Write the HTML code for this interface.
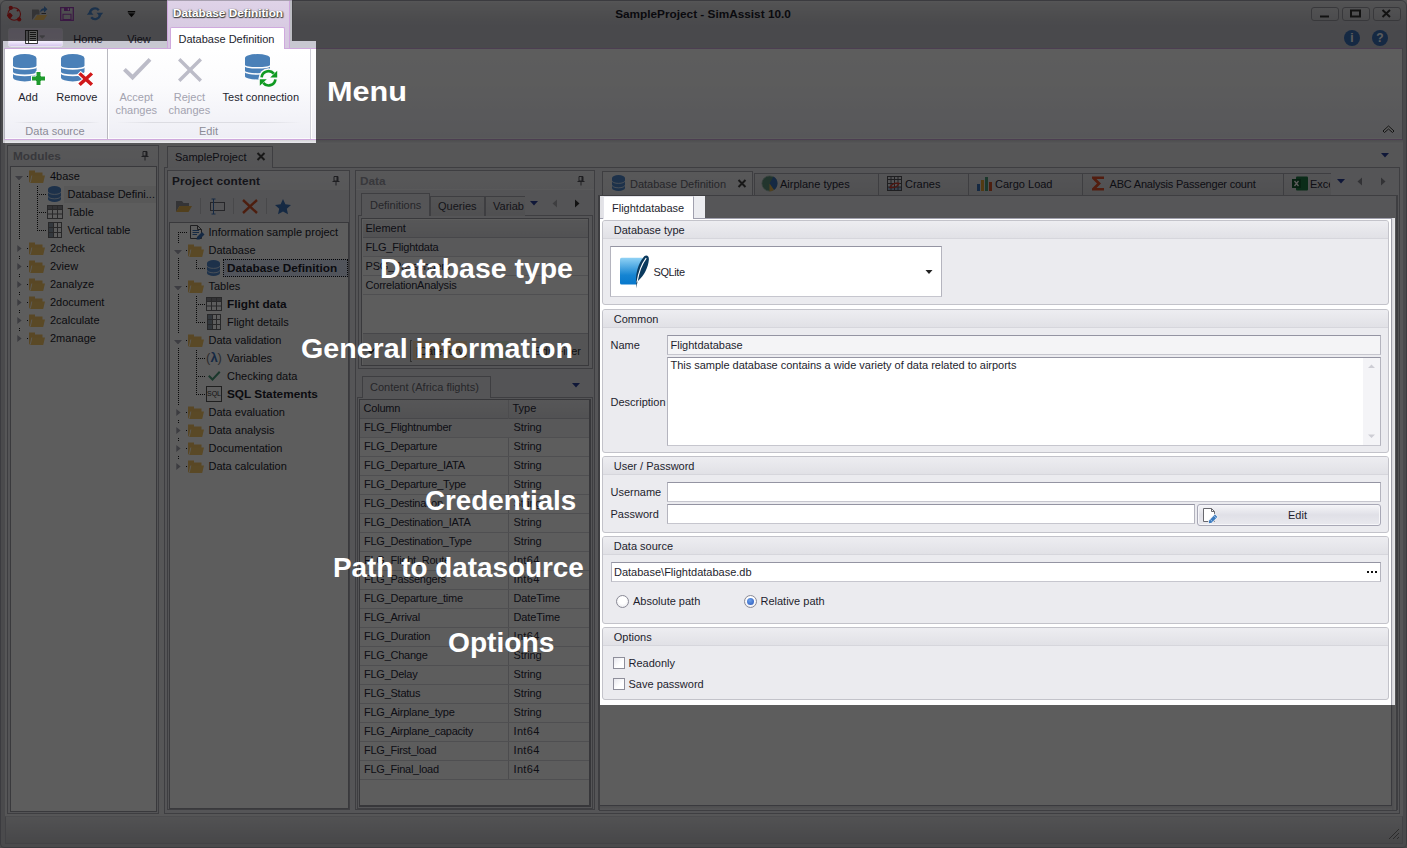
<!DOCTYPE html><html><head><meta charset="utf-8"><title>SampleProject - SimAssist 10.0</title><style>
*{box-sizing:border-box}
html,body{margin:0;padding:0}
body{width:1407px;height:848px;overflow:hidden;position:relative;background:#c9c9cd;font-family:"Liberation Sans",sans-serif;font-size:11px;color:#1e1e2e}
.a{position:absolute}
.t{position:absolute;white-space:nowrap;line-height:14px;height:14px}
.b{font-weight:700;font-size:11.8px}
.c{text-align:center}
.g{color:#9a9aa2}
.pn{position:absolute;background:#d4d4d8;border:1px solid #a9a9b0}
.wh{position:absolute;background:#fff;border:1px solid #9d9da6}
.hd{position:absolute;background:linear-gradient(#dedee2,#d2d2d7);}
.gb{position:absolute;left:602px;width:786.5px;background:#ebebef;border:1px solid #c3c3ca;border-radius:3px}
.gbh{position:absolute;left:0;top:0;right:0;height:18px;background:linear-gradient(#ededf1,#e1e1e6);border-bottom:1px solid #d6d6dc;border-radius:2px 2px 0 0}
.in{position:absolute;background:#fff;border:1px solid #b4b4be;border-top-color:#9494a2;border-bottom-color:#c6c6ce}
.tab{position:absolute;background:linear-gradient(#d9d9dd,#cfcfd4);border:1px solid #a5a5ad;border-bottom:none}
.row{position:absolute;left:0;right:0;height:19px;border-bottom:1px solid #dcdce0}
.lbl{position:absolute;color:#fff;font-weight:700;white-space:nowrap;line-height:1;font-size:28px}
</style></head><body><div id="app" class="a" style="left:0;top:0;width:1407px;height:848px;background:#cbcbcf"><div class="a" style="left:4.5px;top:140px;width:1398px;height:703.5px;background:#ebebef"></div><div class="a" style="left:0px;top:0px;width:1407px;height:26px;background:linear-gradient(#f0f0f2 0,#e2e2e5 3px,#cfcfd4 18px,#c8c8d1 26px)"></div><div class="a" style="left:0px;top:26px;width:1407px;height:22px;background:#c8c8d1"></div><div class="a" style="left:0px;top:0px;width:1407px;height:848px;border:1px solid #a2a2ac;border-radius:6px 6px 4px 4px"></div><div class="t c b" style="left:603px;width:200px;top:7px;color:#1c1c2a">SampleProject - SimAssist 10.0</div><div class="a" style="left:1310.5px;top:6.5px;width:28px;height:14.5px;border:1px solid #9a9aa2;border-radius:3px;background:linear-gradient(#e0e0e4,#cfcfd4)"></div><div class="a" style="left:1341.5px;top:6.5px;width:28px;height:14.5px;border:1px solid #9a9aa2;border-radius:3px;background:linear-gradient(#e0e0e4,#cfcfd4)"></div><div class="a" style="left:1372.5px;top:6.5px;width:28px;height:14.5px;border:1px solid #9a9aa2;border-radius:3px;background:linear-gradient(#e0e0e4,#cfcfd4)"></div><svg class="a" style="left:1310px;top:6px" width="92" height="16" viewBox="0 0 92 16"><path d="M10 10.5H19" stroke="#333" stroke-width="2"/><rect x="41" y="4.5" width="9" height="6" fill="none" stroke="#333" stroke-width="2"/><path d="M72.5 4L80 11M80 4L72.5 11" stroke="#333" stroke-width="2"/></svg><div class="a" style="left:1344px;top:29.5px;width:16px;height:16px;border-radius:8px;background:#3a70b8;color:#fff;font-weight:700;font-size:12px;line-height:16px;text-align:center">i</div><div class="a" style="left:1372px;top:29.5px;width:16px;height:16px;border-radius:8px;background:#3a70b8;color:#fff;font-weight:700;font-size:12px;line-height:16px;text-align:center">?</div><svg class="a" style="left:0px;top:0px" width="150" height="26" viewBox="0 0 150 26">
<circle cx="14.2" cy="14" r="6.3" fill="none" stroke="#e02424" stroke-width="1.1"/><g fill="#e02424"><circle cx="10.8" cy="7.8" r="2.1"/><path d="M9.8 12.4L12.8 15.6L9.8 18.8L6.8 15.6Z"/><circle cx="9.8" cy="15.6" r="2.2"/><circle cx="19.2" cy="19.4" r="2.1"/><circle cx="17.7" cy="10.5" r="1.1"/></g>
<path d="M32 9.5H38.5L39.5 11V14.5H36L32.5 19.5H32Z" fill="#8e8e94"/><path d="M33.8 20L37.2 15H47.2L43.8 20Z" fill="#f4c466"/><path d="M40.2 12.5C40.2 9.5 42 8.2 44 8.2V6L47.5 9.2L44 12.4V10.4C42.5 10.4 41.2 11 40.2 12.5Z" fill="#4a86cc"/><path d="M41.5 13H46V14H41.5Z" fill="#55555a"/>
<path d="M60.7 7.7H73.3V20.3H60.7Z" fill="none" stroke="#a044b8" stroke-width="1.3"/><path d="M64 7.5H70V11H64Z" fill="#a044b8"/><path d="M67.8 8.3H69V10.2H67.8Z" fill="#e8d8f0"/><path d="M63 14.3H71V19.6H63Z" fill="none" stroke="#a044b8" stroke-width="1.1"/>
<g fill="none" stroke="#4a86cc" stroke-width="2.3"><path d="M90 13A5 5 0 0 1 98.8 10.2"/><path d="M100 14.5A5 5 0 0 1 91.2 17.3"/></g><path d="M96.5 12.8H103.2L100 16.8Z M86.8 14.7H93.5L90 10.7Z" fill="#4a86cc"/>
<path d="M127.8 11H135.2V12.4H127.8Z M128 13.3H135L131.5 17.2Z" fill="#111"/>
</svg><div class="a" style="left:7.5px;top:27.5px;width:55px;height:19px;border:1px solid #e6e2ee;border-radius:2.5px;background:linear-gradient(#e6daf2 0,#eadff5 55%,#f2ecfc 75%,#d6c6ee 100%)"></div><svg class="a" style="left:24px;top:29px" width="24" height="16" viewBox="0 0 24 16"><rect x="1.6" y="1.5" width="11.8" height="13" fill="#fff" stroke="#222" stroke-width="0.9"/><rect x="2.2" y="2.1" width="1.8" height="10" fill="#b8b8bc"/><path d="M4.6 1.5V14.5" stroke="#222" stroke-width="0.9"/><path d="M5.8 3.5H12M5.8 5.5H12M5.8 7.5H12M5.8 9.5H12M5.8 11.5H12" stroke="#222" stroke-width="0.9"/><path d="M15.4 7L18.2 9.8L21 7L20 7H16.4Z" fill="#aaaab0"/><path d="M15.6 6.7H20.8" stroke="#88888e" stroke-width="0.6"/></svg><div class="t c " style="left:-12px;width:200px;top:32px;color:#2a2a3a">Home</div><div class="t c " style="left:39px;width:200px;top:32px;color:#2a2a3a">View</div><div class="a" style="left:167px;top:0px;width:122.5px;height:48px;background:linear-gradient(#dfd3e8 0,#d8cbe2 27px,#d6c8e0 48px);border:1px solid #cfa9dd;border-bottom:none;border-top:none"></div><div class="a" style="left:289.5px;top:0px;width:3px;height:41px;background:#bdbdc3"></div><div class="t c b" style="left:128px;width:200px;top:5.800000000000001px;color:#fff;text-shadow:0 1px 1px #444,1px 1px 1px #555,1px 0 1px #777,-1px 0 1px #999;font-size:11.8px">Database Definition</div><div class="a" style="left:167px;top:0px;width:125.5px;height:1px;background:#a8a0b0"></div><div class="a" style="left:4px;top:48px;width:1399px;height:92px;background:linear-gradient(#ffffff 0,#fbfbfd 40%,#eeeef5 100%);border-top:1px solid #cfa9dd;border-bottom:1px solid #cfa9dd;border-left:1px solid #b4b4be;border-right:1px solid #b4b4be;box-shadow:inset 0 -1px 0 #fafafc"></div><div class="a" style="left:169.5px;top:27px;width:115px;height:22px;background:#fff;border:1px solid #cfa9dd;border-bottom:none;border-radius:2px 2px 0 0"></div><div class="t c " style="left:126.5px;width:200px;top:32px;color:#1e1e2e">Database Definition</div><div class="a" style="left:107px;top:49px;width:1px;height:90px;background:#b9b9c0"></div><div class="a" style="left:108px;top:49px;width:1px;height:90px;background:#fff"></div><div class="a" style="left:309.5px;top:49px;width:1px;height:90px;background:#d0d0d8"></div><div class="a" style="left:310.5px;top:49px;width:1px;height:90px;background:#fff"></div><div class="a" style="left:14px;top:121.5px;width:86px;height:1px;background:linear-gradient(90deg,transparent,#dcdce2 20%,#dcdce2 80%,transparent)"></div><div class="a" style="left:116px;top:121.5px;width:186px;height:1px;background:linear-gradient(90deg,transparent,#dcdce2 20%,#dcdce2 80%,transparent)"></div><div class="t c " style="left:-45px;width:200px;top:124px;color:#8b8b96">Data source</div><div class="t c " style="left:108.5px;width:200px;top:124px;color:#8b8b96">Edit</div><svg class="a" style="left:12.8px;top:54px;overflow:visible" width="23.5" height="28" viewBox="0 0 23.5 28" preserveAspectRatio="none"><g fill="#4a80b8"><path d="M0 4.2A11.75 4.2 0 0 1 23.5 4.2V11.8A11.75 2.3 0 0 1 0 11.8Z"/><path d="M0 13.4A11.75 2.3 0 0 0 23.5 13.4V18A11.75 2.6 0 0 1 0 18Z"/><path d="M0 19.7A11.75 2.6 0 0 0 23.5 19.7V23.8A11.75 3.6 0 0 1 0 23.8Z"/></g></svg><svg class="a" style="left:31px;top:71px" width="15" height="15" viewBox="0 0 15 15"><path d="M5 0.5H10V5H14.5V10H10V14.5H5V10H0.5V5H5Z" fill="#1f9a2e" stroke="#fff" stroke-width="1"/></svg><div class="t c " style="left:-72px;width:200px;top:90px;">Add</div><svg class="a" style="left:60.8px;top:54px;overflow:visible" width="23.5" height="28" viewBox="0 0 23.5 28" preserveAspectRatio="none"><g fill="#4a80b8"><path d="M0 4.2A11.75 4.2 0 0 1 23.5 4.2V11.8A11.75 2.3 0 0 1 0 11.8Z"/><path d="M0 13.4A11.75 2.3 0 0 0 23.5 13.4V18A11.75 2.6 0 0 1 0 18Z"/><path d="M0 19.7A11.75 2.6 0 0 0 23.5 19.7V23.8A11.75 3.6 0 0 1 0 23.8Z"/></g></svg><svg class="a" style="left:77px;top:71px" width="17" height="16" viewBox="0 0 17 16"><path d="M3.7 1.2L8.7 5.8L13.7 1.2L16.1 3.6L11.2 8.1L16.1 12.6L13.7 15L8.7 10.4L3.7 15L1.3 12.6L6.2 8.1L1.3 3.6Z" fill="#d0181a" stroke="#fff" stroke-width="2" paint-order="stroke"/></svg><div class="t c " style="left:-23.200000000000003px;width:200px;top:90px;">Remove</div><svg class="a" style="left:122px;top:57px" width="30" height="25" viewBox="0 0 30 25"><path d="M1 13.8L3.8 11L10.6 17.6L26.6 1L29.4 3.8L10.6 23.2Z" fill="#bcbcc8"/></svg><div class="t c " style="left:36.30000000000001px;width:200px;top:90px;color:#a3a3b0">Accept</div><div class="t c " style="left:36.30000000000001px;width:200px;top:103px;color:#a3a3b0">changes</div><svg class="a" style="left:177px;top:57px" width="26" height="26" viewBox="0 0 26 26"><path d="M1 3.4L3.4 1L13 10.6L22.6 1L25 3.4L15.4 13L25 22.6L22.6 25L13 15.4L3.4 25L1 22.6L10.6 13Z" fill="#bcbcc8"/></svg><div class="t c " style="left:89.4px;width:200px;top:90px;color:#a3a3b0">Reject</div><div class="t c " style="left:89.4px;width:200px;top:103px;color:#a3a3b0">changes</div><svg class="a" style="left:244.8px;top:54px;overflow:visible" width="25" height="26.040000000000003" viewBox="0 0 25 28" preserveAspectRatio="none"><g fill="#4a80b8"><path d="M0 4.2A12.5 4.2 0 0 1 25 4.2V11.8A12.5 2.3 0 0 1 0 11.8Z"/><path d="M0 13.4A12.5 2.3 0 0 0 25 13.4V18A12.5 2.6 0 0 1 0 18Z"/><path d="M0 19.7A12.5 2.6 0 0 0 25 19.7V23.8A12.5 3.6 0 0 1 0 23.8Z"/></g></svg><svg class="a" style="left:258px;top:68px" width="21" height="21" viewBox="0 0 21 21"><circle cx="10.5" cy="10.3" r="10" fill="#fbfbfd"/><g fill="none" stroke="#0f9a22" stroke-width="2.7"><path d="M3.6 9.3A6.9 6.9 0 0 1 15.8 5.7"/><path d="M17.4 11.3A6.9 6.9 0 0 1 5.2 14.9"/></g><path d="M19.2 2.8V9.4H12.2Z M1.8 17.8V11.2H8.8Z" fill="#0f9a22"/></svg><div class="t c " style="left:160.8px;width:200px;top:90px;">Test connection</div><div class="a" style="left:4.5px;top:140px;width:1398px;height:3.5px;background:linear-gradient(#d4d4d7,#f2f2f6)"></div><svg class="a" style="left:1382px;top:124px" width="13" height="10" viewBox="0 0 13 10"><path d="M1 7L6.5 2L12 7L10.5 8.5L6.5 5L2.5 8.5Z" fill="#fff" stroke="#333" stroke-width="1"/></svg><div class="a" style="left:4.5px;top:816px;width:1398px;height:27.5px;background:linear-gradient(#e0e0e4,#c3c3c8);border:1px solid #b4b4bc;border-top-color:#d0d0d6"></div><svg class="a" style="left:1388px;top:828px" width="12" height="12" viewBox="0 0 12 12"><path d="M1 11L11 1M5 11L11 5M9 11L11 9" stroke="#777" stroke-width="1"/></svg><div class="a" style="left:7px;top:145px;width:151.5px;height:668.5px;background:#e7e7eb;border:1px solid #a9a9b3"></div><div class="a" style="left:8px;top:146px;width:149.5px;height:20px;background:linear-gradient(#f1f1f4,#eaeaee)"></div><div class="t b" style="left:13px;top:149px;color:#9a9aa4">Modules</div><svg class="a" style="left:141px;top:151px" width="8" height="10" viewBox="0 0 8 10"><path d="M2 0.5H6V5H2ZM0.5 5.5H7.5M4 5.5V9.5" fill="none" stroke="#55555d"/><path d="M4.5 1V5H6V1Z" fill="#55555d"/></svg><div class="a" style="left:9.5px;top:166px;width:147.5px;height:645.5px;background:#fff;border:1px solid #9c9ca6"></div><div class="a" style="left:19px;top:184px;width:1px;height:56px;background:repeating-linear-gradient(180deg,#1a1a1a 0 1px,transparent 1px 2px)"></div><div class="a" style="left:37px;top:186px;width:1px;height:45px;background:repeating-linear-gradient(180deg,#1a1a1a 0 1px,transparent 1px 2px)"></div><svg class="a" style="left:14.5px;top:175.5px" width="8" height="4.5" viewBox="0 0 8 5" preserveAspectRatio="none"><path d="M0 0H8L4 5Z" fill="#a8a8b4"/></svg><div class="a" style="left:27px;top:176px;width:1px;height:1px;background:repeating-linear-gradient(90deg,#1a1a1a 0 1px,transparent 1px 2px)"></div><svg class="a" style="left:29px;top:170px" width="16" height="13" viewBox="0 0 16 13"><path d="M0 0.5H6V2.5H13.5V6H0Z" fill="#f4c466"/><path d="M0 2V11.5L1 13H1.5L3 5.5H1Z" fill="#f4c466"/><path d="M1.2 13L3 5.5H16L14.2 13Z" fill="#f6c768"/><path d="M1.3 12.5L2.8 5.5" stroke="#fff" stroke-width="0.8" fill="none"/></svg><div class="t " style="left:50px;top:169px;">4base</div><div class="a" style="left:37px;top:194px;width:9px;height:1px;background:repeating-linear-gradient(90deg,#1a1a1a 0 1px,transparent 1px 2px)"></div><svg class="a" style="left:48px;top:186px" width="13" height="16" viewBox="0 0 13 16"><path d="M0 3A6.5 3 0 0 1 13 3V13A6.5 3 0 0 1 0 13Z" fill="#4f88cc"/><path d="M0 5.8A6.5 2.6 0 0 0 13 5.8M0 10.2A6.5 2.6 0 0 0 13 10.2" fill="none" stroke="#d4e0f0" stroke-width="0.9"/></svg><div class="a" style="left:64px;top:185.5px;width:92px;height:17px;background:#f0f0f2"></div><div class="t " style="left:67.5px;top:187px;">Database Defini...</div><div class="a" style="left:37px;top:212px;width:9px;height:1px;background:repeating-linear-gradient(90deg,#1a1a1a 0 1px,transparent 1px 2px)"></div><svg class="a" style="left:47px;top:205px" width="16" height="14" viewBox="0 0 16 14"><rect x="0.5" y="0.5" width="15" height="13" fill="#fff" stroke="#6d6d72"/><rect x="1" y="1" width="14" height="3" fill="#8d8d93"/><path d="M0.5 4.5H15.5M0.5 9H15.5M5.5 1V13.5M10.5 1V13.5" stroke="#6d6d72" fill="none"/></svg><div class="t " style="left:67.5px;top:205px;">Table</div><div class="a" style="left:37px;top:230px;width:9px;height:1px;background:repeating-linear-gradient(90deg,#1a1a1a 0 1px,transparent 1px 2px)"></div><svg class="a" style="left:48px;top:222px" width="14" height="16" viewBox="0 0 14 16"><rect x="0.5" y="0.5" width="13" height="15" fill="#fff" stroke="#6d6d72"/><rect x="1" y="1" width="4" height="14" fill="#8d9aa8"/><path d="M0.5 5.5H13.5M0.5 10.5H13.5M5.5 1V15.5M9.5 1V15.5" stroke="#6d6d72" fill="none"/></svg><div class="t " style="left:67.5px;top:223px;">Vertical table</div><svg class="a" style="left:16.5px;top:244.5px" width="5" height="7" viewBox="0 0 5 7"><path d="M0.3 0L4.6 3.5L0.3 7Z" fill="#a4a4b0"/></svg><div class="a" style="left:27px;top:248px;width:1px;height:1px;background:repeating-linear-gradient(90deg,#1a1a1a 0 1px,transparent 1px 2px)"></div><svg class="a" style="left:29px;top:242px" width="16" height="13" viewBox="0 0 16 13"><path d="M0 0.5H6V2.5H13.5V6H0Z" fill="#f4c466"/><path d="M0 2V11.5L1 13H1.5L3 5.5H1Z" fill="#f4c466"/><path d="M1.2 13L3 5.5H16L14.2 13Z" fill="#f6c768"/><path d="M1.3 12.5L2.8 5.5" stroke="#fff" stroke-width="0.8" fill="none"/></svg><div class="t " style="left:50px;top:241px;">2check</div><svg class="a" style="left:16.5px;top:262.5px" width="5" height="7" viewBox="0 0 5 7"><path d="M0.3 0L4.6 3.5L0.3 7Z" fill="#a4a4b0"/></svg><div class="a" style="left:27px;top:266px;width:1px;height:1px;background:repeating-linear-gradient(90deg,#1a1a1a 0 1px,transparent 1px 2px)"></div><svg class="a" style="left:29px;top:260px" width="16" height="13" viewBox="0 0 16 13"><path d="M0 0.5H6V2.5H13.5V6H0Z" fill="#f4c466"/><path d="M0 2V11.5L1 13H1.5L3 5.5H1Z" fill="#f4c466"/><path d="M1.2 13L3 5.5H16L14.2 13Z" fill="#f6c768"/><path d="M1.3 12.5L2.8 5.5" stroke="#fff" stroke-width="0.8" fill="none"/></svg><div class="t " style="left:50px;top:259px;">2view</div><div class="a" style="left:19px;top:256px;width:1px;height:4px;background:repeating-linear-gradient(180deg,#1a1a1a 0 1px,transparent 1px 2px)"></div><svg class="a" style="left:16.5px;top:280.5px" width="5" height="7" viewBox="0 0 5 7"><path d="M0.3 0L4.6 3.5L0.3 7Z" fill="#a4a4b0"/></svg><div class="a" style="left:27px;top:284px;width:1px;height:1px;background:repeating-linear-gradient(90deg,#1a1a1a 0 1px,transparent 1px 2px)"></div><svg class="a" style="left:29px;top:278px" width="16" height="13" viewBox="0 0 16 13"><path d="M0 0.5H6V2.5H13.5V6H0Z" fill="#f4c466"/><path d="M0 2V11.5L1 13H1.5L3 5.5H1Z" fill="#f4c466"/><path d="M1.2 13L3 5.5H16L14.2 13Z" fill="#f6c768"/><path d="M1.3 12.5L2.8 5.5" stroke="#fff" stroke-width="0.8" fill="none"/></svg><div class="t " style="left:50px;top:277px;">2analyze</div><div class="a" style="left:19px;top:274px;width:1px;height:4px;background:repeating-linear-gradient(180deg,#1a1a1a 0 1px,transparent 1px 2px)"></div><svg class="a" style="left:16.5px;top:298.5px" width="5" height="7" viewBox="0 0 5 7"><path d="M0.3 0L4.6 3.5L0.3 7Z" fill="#a4a4b0"/></svg><div class="a" style="left:27px;top:302px;width:1px;height:1px;background:repeating-linear-gradient(90deg,#1a1a1a 0 1px,transparent 1px 2px)"></div><svg class="a" style="left:29px;top:296px" width="16" height="13" viewBox="0 0 16 13"><path d="M0 0.5H6V2.5H13.5V6H0Z" fill="#f4c466"/><path d="M0 2V11.5L1 13H1.5L3 5.5H1Z" fill="#f4c466"/><path d="M1.2 13L3 5.5H16L14.2 13Z" fill="#f6c768"/><path d="M1.3 12.5L2.8 5.5" stroke="#fff" stroke-width="0.8" fill="none"/></svg><div class="t " style="left:50px;top:295px;">2document</div><div class="a" style="left:19px;top:292px;width:1px;height:4px;background:repeating-linear-gradient(180deg,#1a1a1a 0 1px,transparent 1px 2px)"></div><svg class="a" style="left:16.5px;top:316.5px" width="5" height="7" viewBox="0 0 5 7"><path d="M0.3 0L4.6 3.5L0.3 7Z" fill="#a4a4b0"/></svg><div class="a" style="left:27px;top:320px;width:1px;height:1px;background:repeating-linear-gradient(90deg,#1a1a1a 0 1px,transparent 1px 2px)"></div><svg class="a" style="left:29px;top:314px" width="16" height="13" viewBox="0 0 16 13"><path d="M0 0.5H6V2.5H13.5V6H0Z" fill="#f4c466"/><path d="M0 2V11.5L1 13H1.5L3 5.5H1Z" fill="#f4c466"/><path d="M1.2 13L3 5.5H16L14.2 13Z" fill="#f6c768"/><path d="M1.3 12.5L2.8 5.5" stroke="#fff" stroke-width="0.8" fill="none"/></svg><div class="t " style="left:50px;top:313px;">2calculate</div><div class="a" style="left:19px;top:310px;width:1px;height:4px;background:repeating-linear-gradient(180deg,#1a1a1a 0 1px,transparent 1px 2px)"></div><svg class="a" style="left:16.5px;top:334.5px" width="5" height="7" viewBox="0 0 5 7"><path d="M0.3 0L4.6 3.5L0.3 7Z" fill="#a4a4b0"/></svg><div class="a" style="left:27px;top:338px;width:1px;height:1px;background:repeating-linear-gradient(90deg,#1a1a1a 0 1px,transparent 1px 2px)"></div><svg class="a" style="left:29px;top:332px" width="16" height="13" viewBox="0 0 16 13"><path d="M0 0.5H6V2.5H13.5V6H0Z" fill="#f4c466"/><path d="M0 2V11.5L1 13H1.5L3 5.5H1Z" fill="#f4c466"/><path d="M1.2 13L3 5.5H16L14.2 13Z" fill="#f6c768"/><path d="M1.3 12.5L2.8 5.5" stroke="#fff" stroke-width="0.8" fill="none"/></svg><div class="t " style="left:50px;top:331px;">2manage</div><div class="a" style="left:19px;top:328px;width:1px;height:4px;background:repeating-linear-gradient(180deg,#1a1a1a 0 1px,transparent 1px 2px)"></div><div class="a" style="left:163.5px;top:166.5px;width:1236.5px;height:647.5px;background:#e9e9ed;border:1px solid #a9a9b3"></div><div class="a" style="left:167px;top:146px;width:105.5px;height:21.5px;background:linear-gradient(#f0f0f3,#e7e7eb);border:1px solid #a9a9b3;border-bottom:none"></div><div class="t " style="left:175px;top:150px;color:#2a2a3a">SampleProject</div><svg class="a" style="left:256px;top:152px" width="10" height="9" viewBox="0 0 10 9"><path d="M1.5 1L8.5 8M8.5 1L1.5 8" stroke="#444" stroke-width="2"/></svg><svg class="a" style="left:1381px;top:153px" width="8" height="4.5" viewBox="0 0 8 5" preserveAspectRatio="none"><path d="M0 0H8L4 5Z" fill="#2b3f9a"/></svg><div class="a" style="left:167px;top:170px;width:182.5px;height:640px;background:#e7e7eb;border:1px solid #a9a9b3"></div><div class="a" style="left:168px;top:171px;width:180.5px;height:19px;background:linear-gradient(#f6f6f9,#f0f0f4)"></div><div class="t b" style="left:172px;top:173.5px;color:#3a3a48;letter-spacing:0.15px">Project content</div><svg class="a" style="left:332px;top:176px" width="8" height="10" viewBox="0 0 8 10"><path d="M2 0.5H6V5H2ZM0.5 5.5H7.5M4 5.5V9.5" fill="none" stroke="#55555d"/><path d="M4.5 1V5H6V1Z" fill="#55555d"/></svg><svg class="a" style="left:174px;top:196px" width="122" height="20" viewBox="0 0 122 20">
<path d="M2 5H8L9.5 7H15V10H5.5L2 16Z" fill="#8e8e94"/><path d="M2 16L5.5 10H18L14.5 16Z" fill="#e0b050"/>
<path d="M26.5 2V18" stroke="#c5c5cc"/><path d="M59.5 2V18" stroke="#c5c5cc"/><path d="M92.5 2V18" stroke="#c5c5cc"/>
<rect x="36.5" y="6.5" width="14" height="8" fill="none" stroke="#6a6a70"/><path d="M39.5 3V18M37.5 3H41.5M37.5 18H41.5" stroke="#3a70b8" fill="none"/>
<path d="M69 4L83 17M83 4L69 17" stroke="#d3542a" stroke-width="2.4"/>
<path d="M109 3L111.4 8.3L117 9L112.8 12.8L114 18.3L109 15.5L104 18.3L105.2 12.8L101 9L106.6 8.3Z" fill="#3a70b8"/>
</svg><div class="a" style="left:168.5px;top:222px;width:180px;height:586.5px;background:#fff;border:1px solid #9c9ca6"></div><div class="a" style="left:178px;top:232px;width:1px;height:11px;background:repeating-linear-gradient(180deg,#1a1a1a 0 1px,transparent 1px 2px)"></div><div class="a" style="left:178px;top:258px;width:1px;height:22px;background:repeating-linear-gradient(180deg,#1a1a1a 0 1px,transparent 1px 2px)"></div><div class="a" style="left:178px;top:294px;width:1px;height:40px;background:repeating-linear-gradient(180deg,#1a1a1a 0 1px,transparent 1px 2px)"></div><div class="a" style="left:178px;top:348px;width:1px;height:58px;background:repeating-linear-gradient(180deg,#1a1a1a 0 1px,transparent 1px 2px)"></div><div class="a" style="left:178px;top:420px;width:1px;height:4px;background:repeating-linear-gradient(180deg,#1a1a1a 0 1px,transparent 1px 2px)"></div><div class="a" style="left:178px;top:438px;width:1px;height:4px;background:repeating-linear-gradient(180deg,#1a1a1a 0 1px,transparent 1px 2px)"></div><div class="a" style="left:178px;top:456px;width:1px;height:4px;background:repeating-linear-gradient(180deg,#1a1a1a 0 1px,transparent 1px 2px)"></div><div class="a" style="left:178px;top:232px;width:9px;height:1px;background:repeating-linear-gradient(90deg,#1a1a1a 0 1px,transparent 1px 2px)"></div><svg class="a" style="left:190px;top:225px" width="15" height="15" viewBox="0 0 15 15"><path d="M0.5 0.5H7.5L11.5 4.5V13.5H0.5Z" fill="#fff" stroke="#55555a"/><path d="M7.5 0.5V4.5H11.5" fill="none" stroke="#55555a"/><path d="M2.5 5.5H9M2.5 7.5H9M2.5 9.5H7" stroke="#3a70b8"/><path d="M6.5 14.5L7 12L12 7L14.5 9.5L9.5 14.5Z" fill="#3a70b8"/></svg><div class="t " style="left:208.5px;top:225px;">Information sample project</div><svg class="a" style="left:173.5px;top:249.5px" width="8" height="4.5" viewBox="0 0 8 5" preserveAspectRatio="none"><path d="M0 0H8L4 5Z" fill="#a8a8b4"/></svg><div class="a" style="left:186px;top:250px;width:1px;height:1px;background:repeating-linear-gradient(90deg,#1a1a1a 0 1px,transparent 1px 2px)"></div><svg class="a" style="left:188px;top:244px" width="16" height="13" viewBox="0 0 16 13"><path d="M0 0.5H6V2.5H13.5V6H0Z" fill="#f4c466"/><path d="M0 2V11.5L1 13H1.5L3 5.5H1Z" fill="#f4c466"/><path d="M1.2 13L3 5.5H16L14.2 13Z" fill="#f6c768"/><path d="M1.3 12.5L2.8 5.5" stroke="#fff" stroke-width="0.8" fill="none"/></svg><div class="t " style="left:208.5px;top:243px;">Database</div><div class="a" style="left:196px;top:260px;width:1px;height:8px;background:repeating-linear-gradient(180deg,#1a1a1a 0 1px,transparent 1px 2px)"></div><div class="a" style="left:196px;top:268px;width:9px;height:1px;background:repeating-linear-gradient(90deg,#1a1a1a 0 1px,transparent 1px 2px)"></div><div class="a" style="left:223px;top:259px;width:125px;height:18px;background:#dde5f8;border:1px dotted #111"></div><div class="t b" style="left:227px;top:261px;">Database Definition</div><svg class="a" style="left:207px;top:260px" width="13" height="16" viewBox="0 0 13 16"><path d="M0 3A6.5 3 0 0 1 13 3V13A6.5 3 0 0 1 0 13Z" fill="#4f88cc"/><path d="M0 5.8A6.5 2.6 0 0 0 13 5.8M0 10.2A6.5 2.6 0 0 0 13 10.2" fill="none" stroke="#d4e0f0" stroke-width="0.9"/></svg><svg class="a" style="left:173.5px;top:285.5px" width="8" height="4.5" viewBox="0 0 8 5" preserveAspectRatio="none"><path d="M0 0H8L4 5Z" fill="#a8a8b4"/></svg><div class="a" style="left:186px;top:286px;width:1px;height:1px;background:repeating-linear-gradient(90deg,#1a1a1a 0 1px,transparent 1px 2px)"></div><svg class="a" style="left:188px;top:280px" width="16" height="13" viewBox="0 0 16 13"><path d="M0 0.5H6V2.5H13.5V6H0Z" fill="#f4c466"/><path d="M0 2V11.5L1 13H1.5L3 5.5H1Z" fill="#f4c466"/><path d="M1.2 13L3 5.5H16L14.2 13Z" fill="#f6c768"/><path d="M1.3 12.5L2.8 5.5" stroke="#fff" stroke-width="0.8" fill="none"/></svg><div class="t " style="left:208.5px;top:279px;">Tables</div><div class="a" style="left:196px;top:296px;width:1px;height:26px;background:repeating-linear-gradient(180deg,#1a1a1a 0 1px,transparent 1px 2px)"></div><div class="a" style="left:196px;top:304px;width:9px;height:1px;background:repeating-linear-gradient(90deg,#1a1a1a 0 1px,transparent 1px 2px)"></div><div class="t b" style="left:227px;top:297px;">Flight data</div><svg class="a" style="left:206px;top:297px" width="16" height="14" viewBox="0 0 16 14"><rect x="0.5" y="0.5" width="15" height="13" fill="#fff" stroke="#6d6d72"/><rect x="1" y="1" width="14" height="3" fill="#8d8d93"/><path d="M0.5 4.5H15.5M0.5 9H15.5M5.5 1V13.5M10.5 1V13.5" stroke="#6d6d72" fill="none"/></svg><div class="a" style="left:196px;top:322px;width:9px;height:1px;background:repeating-linear-gradient(90deg,#1a1a1a 0 1px,transparent 1px 2px)"></div><div class="t " style="left:227px;top:315px;">Flight details</div><svg class="a" style="left:207px;top:314px" width="14" height="16" viewBox="0 0 14 16"><rect x="0.5" y="0.5" width="13" height="15" fill="#fff" stroke="#6d6d72"/><rect x="1" y="1" width="4" height="14" fill="#8d9aa8"/><path d="M0.5 5.5H13.5M0.5 10.5H13.5M5.5 1V15.5M9.5 1V15.5" stroke="#6d6d72" fill="none"/></svg><svg class="a" style="left:173.5px;top:339.5px" width="8" height="4.5" viewBox="0 0 8 5" preserveAspectRatio="none"><path d="M0 0H8L4 5Z" fill="#a8a8b4"/></svg><div class="a" style="left:186px;top:340px;width:1px;height:1px;background:repeating-linear-gradient(90deg,#1a1a1a 0 1px,transparent 1px 2px)"></div><svg class="a" style="left:188px;top:334px" width="16" height="13" viewBox="0 0 16 13"><path d="M0 0.5H6V2.5H13.5V6H0Z" fill="#f4c466"/><path d="M0 2V11.5L1 13H1.5L3 5.5H1Z" fill="#f4c466"/><path d="M1.2 13L3 5.5H16L14.2 13Z" fill="#f6c768"/><path d="M1.3 12.5L2.8 5.5" stroke="#fff" stroke-width="0.8" fill="none"/></svg><div class="t " style="left:208.5px;top:333px;">Data validation</div><div class="a" style="left:196px;top:350px;width:1px;height:44px;background:repeating-linear-gradient(180deg,#1a1a1a 0 1px,transparent 1px 2px)"></div><div class="a" style="left:196px;top:358px;width:9px;height:1px;background:repeating-linear-gradient(90deg,#1a1a1a 0 1px,transparent 1px 2px)"></div><div class="t " style="left:227px;top:351px;">Variables</div><div class="t" style="left:204px;top:350px;font-size:13px;color:#77777e;width:20px;text-align:center;line-height:16px;height:16px">(<b style="color:#3a70b8">&#955;</b>)</div><div class="a" style="left:196px;top:376px;width:9px;height:1px;background:repeating-linear-gradient(90deg,#1a1a1a 0 1px,transparent 1px 2px)"></div><div class="t " style="left:227px;top:369px;">Checking data</div><svg class="a" style="left:207px;top:370px" width="14" height="12" viewBox="0 0 14 12"><path d="M1 6.5L2.5 5L5.5 8L12 1L13.5 2.5L5.5 11Z" fill="#4a9a7a"/></svg><div class="a" style="left:196px;top:394px;width:9px;height:1px;background:repeating-linear-gradient(90deg,#1a1a1a 0 1px,transparent 1px 2px)"></div><div class="t b" style="left:227px;top:387px;">SQL Statements</div><div class="a" style="left:206px;top:386px;width:16px;height:16px;border:1px solid #555;background:#fff;font-size:7px;line-height:14px;text-align:center;color:#333">SQL</div><svg class="a" style="left:175.5px;top:408.5px" width="5" height="7" viewBox="0 0 5 7"><path d="M0.3 0L4.6 3.5L0.3 7Z" fill="#a4a4b0"/></svg><div class="a" style="left:186px;top:412px;width:1px;height:1px;background:repeating-linear-gradient(90deg,#1a1a1a 0 1px,transparent 1px 2px)"></div><svg class="a" style="left:188px;top:406px" width="16" height="13" viewBox="0 0 16 13"><path d="M0 0.5H6V2.5H13.5V6H0Z" fill="#f4c466"/><path d="M0 2V11.5L1 13H1.5L3 5.5H1Z" fill="#f4c466"/><path d="M1.2 13L3 5.5H16L14.2 13Z" fill="#f6c768"/><path d="M1.3 12.5L2.8 5.5" stroke="#fff" stroke-width="0.8" fill="none"/></svg><div class="t " style="left:208.5px;top:405px;">Data evaluation</div><svg class="a" style="left:175.5px;top:426.5px" width="5" height="7" viewBox="0 0 5 7"><path d="M0.3 0L4.6 3.5L0.3 7Z" fill="#a4a4b0"/></svg><div class="a" style="left:186px;top:430px;width:1px;height:1px;background:repeating-linear-gradient(90deg,#1a1a1a 0 1px,transparent 1px 2px)"></div><svg class="a" style="left:188px;top:424px" width="16" height="13" viewBox="0 0 16 13"><path d="M0 0.5H6V2.5H13.5V6H0Z" fill="#f4c466"/><path d="M0 2V11.5L1 13H1.5L3 5.5H1Z" fill="#f4c466"/><path d="M1.2 13L3 5.5H16L14.2 13Z" fill="#f6c768"/><path d="M1.3 12.5L2.8 5.5" stroke="#fff" stroke-width="0.8" fill="none"/></svg><div class="t " style="left:208.5px;top:423px;">Data analysis</div><svg class="a" style="left:175.5px;top:444.5px" width="5" height="7" viewBox="0 0 5 7"><path d="M0.3 0L4.6 3.5L0.3 7Z" fill="#a4a4b0"/></svg><div class="a" style="left:186px;top:448px;width:1px;height:1px;background:repeating-linear-gradient(90deg,#1a1a1a 0 1px,transparent 1px 2px)"></div><svg class="a" style="left:188px;top:442px" width="16" height="13" viewBox="0 0 16 13"><path d="M0 0.5H6V2.5H13.5V6H0Z" fill="#f4c466"/><path d="M0 2V11.5L1 13H1.5L3 5.5H1Z" fill="#f4c466"/><path d="M1.2 13L3 5.5H16L14.2 13Z" fill="#f6c768"/><path d="M1.3 12.5L2.8 5.5" stroke="#fff" stroke-width="0.8" fill="none"/></svg><div class="t " style="left:208.5px;top:441px;">Documentation</div><svg class="a" style="left:175.5px;top:462.5px" width="5" height="7" viewBox="0 0 5 7"><path d="M0.3 0L4.6 3.5L0.3 7Z" fill="#a4a4b0"/></svg><div class="a" style="left:186px;top:466px;width:1px;height:1px;background:repeating-linear-gradient(90deg,#1a1a1a 0 1px,transparent 1px 2px)"></div><svg class="a" style="left:188px;top:460px" width="16" height="13" viewBox="0 0 16 13"><path d="M0 0.5H6V2.5H13.5V6H0Z" fill="#f4c466"/><path d="M0 2V11.5L1 13H1.5L3 5.5H1Z" fill="#f4c466"/><path d="M1.2 13L3 5.5H16L14.2 13Z" fill="#f6c768"/><path d="M1.3 12.5L2.8 5.5" stroke="#fff" stroke-width="0.8" fill="none"/></svg><div class="t " style="left:208.5px;top:459px;">Data calculation</div><div class="a" style="left:354.5px;top:170px;width:240px;height:640px;background:#e7e7eb;border:1px solid #a9a9b3"></div><div class="a" style="left:355.5px;top:171px;width:238px;height:18.5px;background:linear-gradient(#f0f0f3,#eaeaee);border-bottom:1px solid #f4f4f7"></div><div class="t b" style="left:360px;top:174px;color:#9a9aa4">Data</div><svg class="a" style="left:577px;top:176px" width="8" height="10" viewBox="0 0 8 10"><path d="M2 0.5H6V5H2ZM0.5 5.5H7.5M4 5.5V9.5" fill="none" stroke="#55555d"/><path d="M4.5 1V5H6V1Z" fill="#55555d"/></svg><div class="a" style="left:358px;top:215px;width:234.5px;height:153.5px;background:#e9e9ed;border:1px solid #a9a9b3"></div><div class="a" style="left:361.4px;top:193.4px;width:69px;height:22.6px;background:#e9e9ed;border:1px solid #a9a9b3;border-bottom:none"></div><div class="a" style="left:430px;top:195.5px;width:55px;height:20px;background:linear-gradient(#e6e6ea,#dadadf);border:1px solid #a9a9b3;border-bottom:none"></div><div class="a" style="left:485px;top:195.5px;width:40px;height:20px;background:linear-gradient(#e6e6ea,#dadadf);border:1px solid #a9a9b3;border-bottom:none;border-right:none"></div><div class="t " style="left:370px;top:198px;color:#6a6a74">Definitions</div><div class="t " style="left:438px;top:199px;color:#3a3a48">Queries</div><div class="t " style="left:493px;top:199px;color:#3a3a48">Variab</div><svg class="a" style="left:530px;top:201px" width="8" height="4.5" viewBox="0 0 8 5" preserveAspectRatio="none"><path d="M0 0H8L4 5Z" fill="#2b3f9a"/></svg><svg class="a" style="left:552px;top:199px" width="6" height="9" viewBox="0 0 6 9"><path d="M5 0.5V8.5L0.5 4.5Z" fill="#aaaab0"/></svg><svg class="a" style="left:574px;top:199px" width="6" height="9" viewBox="0 0 6 9"><path d="M1 0.5V8.5L5.5 4.5Z" fill="#333"/></svg><div class="a" style="left:361.4px;top:218px;width:227.5px;height:147.5px;background:#fff;border:1px solid #9c9ca6"></div><div class="a" style="left:362.8px;top:219.5px;width:225px;height:18.5px;background:linear-gradient(#ededf0,#e0e0e4);border-bottom:1px solid #c3c3ca"></div><div class="t " style="left:365.5px;top:220.8px;color:#2a2a3a">Element</div><div class="a" style="left:362.8px;top:238px;width:225px;height:19px;border-bottom:1px solid #d9d9de;background:#f3f3f6"></div><div class="t " style="left:365.5px;top:240px;color:#2a2a3a;letter-spacing:-0.2px">FLG_Flightdata</div><div class="a" style="left:362.8px;top:257px;width:225px;height:19px;border-bottom:1px solid #d9d9de"></div><div class="t " style="left:365.5px;top:259px;color:#2a2a3a;letter-spacing:-0.2px">PSG_Passengers</div><div class="a" style="left:362.8px;top:276px;width:225px;height:19px;border-bottom:1px solid #d9d9de"></div><div class="t " style="left:365.5px;top:278px;color:#2a2a3a;letter-spacing:-0.2px">CorrelationAnalysis</div><div class="a" style="left:362.8px;top:333px;width:225px;height:31.5px;background:#e6e6ea;border-top:1px solid #c3c3ca"></div><svg class="a" style="left:366px;top:343px" width="14" height="12" viewBox="0 0 14 12"><path d="M1 6L5 10L13 1" fill="none" stroke="#333" stroke-width="1.5"/></svg><div class="a" style="left:410px;top:340px;width:2px;height:22px;border:1px solid #888;border-right:none"></div><div class="a" style="left:413px;top:341px;width:54px;height:19px;background:#fad8b0"></div><div class="a" style="left:485px;top:341px;width:24px;height:19px;background:#cfe4c8"></div><div class="t " style="left:416px;top:344px;color:#333">[Category]</div><div class="t " style="left:552px;top:344px;color:#333;left:auto;right:826px">Edit Filter</div><div class="a" style="left:357px;top:397px;width:235.5px;height:411.5px;background:#e9e9ed;border:1px solid #a9a9b3"></div><div class="a" style="left:361.5px;top:375.5px;width:129px;height:22.5px;background:#e9e9ed;border:1px solid #a9a9b3;border-bottom:none"></div><div class="t " style="left:370px;top:380px;color:#6a6a74">Content (Africa flights)</div><svg class="a" style="left:572px;top:383px" width="8" height="4.5" viewBox="0 0 8 5" preserveAspectRatio="none"><path d="M0 0H8L4 5Z" fill="#2b3f9a"/></svg><div class="a" style="left:359.3px;top:399px;width:231.5px;height:408px;background:#fff;border:1px solid #9696a0;border-width:1px 2px 2px 1px"></div><div class="a" style="left:360.3px;top:400px;width:229px;height:18.5px;background:linear-gradient(#ededf0,#e0e0e4);border-bottom:1px solid #c3c3ca"></div><div class="a" style="left:508.4px;top:400px;width:1px;height:378.5px;background:#d0d0d6"></div><div class="t " style="left:363.5px;top:401px;color:#2a2a3a;letter-spacing:-0.2px">Column</div><div class="t " style="left:512.5px;top:401px;color:#2a2a3a">Type</div><div class="a" style="left:360.3px;top:418.5px;width:229px;height:19px;border-bottom:1px solid #d9d9de;background:#f0f0f3"></div><div class="t " style="left:364px;top:420px;color:#2a2a3a;letter-spacing:-0.25px">FLG_Flightnumber</div><div class="t " style="left:513.5px;top:420px;color:#2a2a3a;letter-spacing:-0.1px">String</div><div class="a" style="left:360.3px;top:437.5px;width:229px;height:19px;border-bottom:1px solid #d9d9de"></div><div class="t " style="left:364px;top:439px;color:#2a2a3a;letter-spacing:-0.25px">FLG_Departure</div><div class="t " style="left:513.5px;top:439px;color:#2a2a3a;letter-spacing:-0.1px">String</div><div class="a" style="left:360.3px;top:456.5px;width:229px;height:19px;border-bottom:1px solid #d9d9de"></div><div class="t " style="left:364px;top:458px;color:#2a2a3a;letter-spacing:-0.25px">FLG_Departure_IATA</div><div class="t " style="left:513.5px;top:458px;color:#2a2a3a;letter-spacing:-0.1px">String</div><div class="a" style="left:360.3px;top:475.5px;width:229px;height:19px;border-bottom:1px solid #d9d9de"></div><div class="t " style="left:364px;top:477px;color:#2a2a3a;letter-spacing:-0.25px">FLG_Departure_Type</div><div class="t " style="left:513.5px;top:477px;color:#2a2a3a;letter-spacing:-0.1px">String</div><div class="a" style="left:360.3px;top:494.5px;width:229px;height:19px;border-bottom:1px solid #d9d9de"></div><div class="t " style="left:364px;top:496px;color:#2a2a3a;letter-spacing:-0.25px">FLG_Destination</div><div class="t " style="left:513.5px;top:496px;color:#2a2a3a;letter-spacing:-0.1px">String</div><div class="a" style="left:360.3px;top:513.5px;width:229px;height:19px;border-bottom:1px solid #d9d9de"></div><div class="t " style="left:364px;top:515px;color:#2a2a3a;letter-spacing:-0.25px">FLG_Destination_IATA</div><div class="t " style="left:513.5px;top:515px;color:#2a2a3a;letter-spacing:-0.1px">String</div><div class="a" style="left:360.3px;top:532.5px;width:229px;height:19px;border-bottom:1px solid #d9d9de"></div><div class="t " style="left:364px;top:534px;color:#2a2a3a;letter-spacing:-0.25px">FLG_Destination_Type</div><div class="t " style="left:513.5px;top:534px;color:#2a2a3a;letter-spacing:-0.1px">String</div><div class="a" style="left:360.3px;top:551.5px;width:229px;height:19px;border-bottom:1px solid #d9d9de"></div><div class="t " style="left:364px;top:553px;color:#2a2a3a;letter-spacing:-0.25px">FLG_Flight_Route</div><div class="t " style="left:513.5px;top:553px;color:#2a2a3a;letter-spacing:0.35px">Int64</div><div class="a" style="left:360.3px;top:570.5px;width:229px;height:19px;border-bottom:1px solid #d9d9de"></div><div class="t " style="left:364px;top:572px;color:#2a2a3a;letter-spacing:-0.25px">FLG_Passengers</div><div class="t " style="left:513.5px;top:572px;color:#2a2a3a;letter-spacing:0.35px">Int64</div><div class="a" style="left:360.3px;top:589.5px;width:229px;height:19px;border-bottom:1px solid #d9d9de"></div><div class="t " style="left:364px;top:591px;color:#2a2a3a;letter-spacing:-0.25px">FLG_Departure_time</div><div class="t " style="left:513.5px;top:591px;color:#2a2a3a;letter-spacing:-0.1px">DateTime</div><div class="a" style="left:360.3px;top:608.5px;width:229px;height:19px;border-bottom:1px solid #d9d9de"></div><div class="t " style="left:364px;top:610px;color:#2a2a3a;letter-spacing:-0.25px">FLG_Arrival</div><div class="t " style="left:513.5px;top:610px;color:#2a2a3a;letter-spacing:-0.1px">DateTime</div><div class="a" style="left:360.3px;top:627.5px;width:229px;height:19px;border-bottom:1px solid #d9d9de"></div><div class="t " style="left:364px;top:629px;color:#2a2a3a;letter-spacing:-0.25px">FLG_Duration</div><div class="t " style="left:513.5px;top:629px;color:#2a2a3a;letter-spacing:0.35px">Int64</div><div class="a" style="left:360.3px;top:646.5px;width:229px;height:19px;border-bottom:1px solid #d9d9de"></div><div class="t " style="left:364px;top:648px;color:#2a2a3a;letter-spacing:-0.25px">FLG_Change</div><div class="t " style="left:513.5px;top:648px;color:#2a2a3a;letter-spacing:-0.1px">String</div><div class="a" style="left:360.3px;top:665.5px;width:229px;height:19px;border-bottom:1px solid #d9d9de"></div><div class="t " style="left:364px;top:667px;color:#2a2a3a;letter-spacing:-0.25px">FLG_Delay</div><div class="t " style="left:513.5px;top:667px;color:#2a2a3a;letter-spacing:-0.1px">String</div><div class="a" style="left:360.3px;top:684.5px;width:229px;height:19px;border-bottom:1px solid #d9d9de"></div><div class="t " style="left:364px;top:686px;color:#2a2a3a;letter-spacing:-0.25px">FLG_Status</div><div class="t " style="left:513.5px;top:686px;color:#2a2a3a;letter-spacing:-0.1px">String</div><div class="a" style="left:360.3px;top:703.5px;width:229px;height:19px;border-bottom:1px solid #d9d9de"></div><div class="t " style="left:364px;top:705px;color:#2a2a3a;letter-spacing:-0.25px">FLG_Airplane_type</div><div class="t " style="left:513.5px;top:705px;color:#2a2a3a;letter-spacing:-0.1px">String</div><div class="a" style="left:360.3px;top:722.5px;width:229px;height:19px;border-bottom:1px solid #d9d9de"></div><div class="t " style="left:364px;top:724px;color:#2a2a3a;letter-spacing:-0.25px">FLG_Airplane_capacity</div><div class="t " style="left:513.5px;top:724px;color:#2a2a3a;letter-spacing:0.35px">Int64</div><div class="a" style="left:360.3px;top:741.5px;width:229px;height:19px;border-bottom:1px solid #d9d9de"></div><div class="t " style="left:364px;top:743px;color:#2a2a3a;letter-spacing:-0.25px">FLG_First_load</div><div class="t " style="left:513.5px;top:743px;color:#2a2a3a;letter-spacing:0.35px">Int64</div><div class="a" style="left:360.3px;top:760.5px;width:229px;height:19px;border-bottom:1px solid #d9d9de"></div><div class="t " style="left:364px;top:762px;color:#2a2a3a;letter-spacing:-0.25px">FLG_Final_load</div><div class="t " style="left:513.5px;top:762px;color:#2a2a3a;letter-spacing:0.35px">Int64</div><div class="a" style="left:598px;top:195px;width:799.5px;height:615px;background:#e7e7eb;border:1px solid #a9a9b3"></div><div class="a" style="left:602.4px;top:170.5px;width:151.10000000000002px;height:26px;background:linear-gradient(#f2f2f5,#e9e9ed);border:1px solid #a9a9b3;border-bottom:none"></div><div class="a" style="left:753.5px;top:172.5px;width:125.5px;height:23px;background:linear-gradient(#e8e8ec,#dbdbe0);border:1px solid #a9a9b3;"></div><div class="a" style="left:878px;top:172.5px;width:91px;height:23px;background:linear-gradient(#e8e8ec,#dbdbe0);border:1px solid #a9a9b3;"></div><div class="a" style="left:968px;top:172.5px;width:115px;height:23px;background:linear-gradient(#e8e8ec,#dbdbe0);border:1px solid #a9a9b3;"></div><div class="a" style="left:1082px;top:172.5px;width:202px;height:23px;background:linear-gradient(#e8e8ec,#dbdbe0);border:1px solid #a9a9b3;"></div><div class="a" style="left:1283px;top:172.5px;width:48px;height:23px;background:linear-gradient(#e8e8ec,#dbdbe0);border:1px solid #a9a9b3;border-right:none"></div><svg class="a" style="left:612px;top:175px" width="13" height="16" viewBox="0 0 13 16"><path d="M0 3A6.5 3 0 0 1 13 3V13A6.5 3 0 0 1 0 13Z" fill="#4f88cc"/><path d="M0 5.8A6.5 2.6 0 0 0 13 5.8M0 10.2A6.5 2.6 0 0 0 13 10.2" fill="none" stroke="#d4e0f0" stroke-width="0.9"/></svg><div class="t " style="left:630px;top:176.5px;color:#6a6a74">Database Definition</div><svg class="a" style="left:737px;top:179px" width="10" height="9" viewBox="0 0 10 9"><path d="M1.5 1L8.5 8M8.5 1L1.5 8" stroke="#444" stroke-width="2"/></svg><svg class="a" style="left:761px;top:175px" width="17" height="17" viewBox="0 0 17 17"><circle cx="8.5" cy="8.5" r="7.6" fill="#5f927c" stroke="#9ab8aa" stroke-width="0.8"/><path d="M8.5 8.5L12.5 1.5A8 8 0 0 1 13 15Z" fill="#3a70b8"/><path d="M8.5 8.5L13 15A8 8 0 0 1 8.5 16.5Z" fill="#e0b050"/></svg><div class="t " style="left:780px;top:177px;color:#2a2a3a">Airplane types</div><svg class="a" style="left:887px;top:176px" width="15" height="15" viewBox="0 0 15 15"><rect x="0.5" y="0.5" width="14" height="14" fill="#e4e4ea" stroke="#55555c"/><rect x="1" y="11" width="13" height="3" fill="#9ab4d8"/><path d="M0 3.5H15M0 7.5H15M0 11H15M4 0V15M7.5 0V15M11 0V15" stroke="#55555c" stroke-width="1"/><path d="M3 11.5C4 8 8 6.5 12 7.5C10 11 6 12 3 11.5Z" stroke="#d83a2a" stroke-width="1.3" fill="none"/></svg><div class="t " style="left:905px;top:177px;color:#2a2a3a">Cranes</div><svg class="a" style="left:977px;top:176px" width="15" height="15" viewBox="0 0 15 15"><rect x="0" y="8" width="3" height="7" fill="#3a70b8"/><rect x="4" y="4" width="3" height="11" fill="#e0a030"/><rect x="8" y="1" width="3" height="14" fill="#4a9a7a"/><rect x="12" y="6" width="3" height="9" fill="#d3542a"/></svg><div class="t " style="left:995px;top:177px;color:#2a2a3a">Cargo Load</div><svg class="a" style="left:1091px;top:176px" width="14" height="15" viewBox="0 0 14 15"><path d="M1 0.5H13V3H5.5L10 7.5L5.5 12H13V14.5H1V12.5L6 7.5L1 2.5Z" fill="#e0502a"/></svg><div class="t " style="left:1109.5px;top:177px;color:#2a2a3a;letter-spacing:-0.2px">ABC Analysis Passenger count</div><svg class="a" style="left:1292px;top:176px" width="16" height="15" viewBox="0 0 16 15"><rect x="4" y="0.5" width="12" height="14" rx="1" fill="#1f7a45"/><rect x="0" y="3" width="9" height="9" fill="#155c33"/><path d="M2.5 5L6.5 10M6.5 5L2.5 10" stroke="#fff" stroke-width="1.3"/></svg><div class="t " style="left:1310px;top:177px;color:#2a2a3a;width:20px;overflow:hidden">Exce</div><svg class="a" style="left:1336.5px;top:179px" width="8" height="4.5" viewBox="0 0 8 5" preserveAspectRatio="none"><path d="M0 0H8L4 5Z" fill="#2b3f9a"/></svg><svg class="a" style="left:1357px;top:177px" width="6" height="9" viewBox="0 0 6 9"><path d="M5 0.5V8.5L0.5 4.5Z" fill="#8a8a92"/></svg><svg class="a" style="left:1380px;top:177px" width="6" height="9" viewBox="0 0 6 9"><path d="M1 0.5V8.5L5.5 4.5Z" fill="#8a8a92"/></svg><div class="a" style="left:599px;top:195px;width:798px;height:616px;background:#ebecf0;border:1px solid #a9a9b3"></div><div class="a" style="left:600px;top:218px;width:792px;height:588px;background:#fff;border-top:1px solid #a0a0ae;border-right:1px solid #a0a0aa;border-bottom:1px solid #a0a0aa"></div><div class="a" style="left:1392px;top:218px;width:4px;height:592px;background:linear-gradient(90deg,#d6d6da,#efeff2)"></div><div class="a" style="left:600px;top:806px;width:792px;height:4px;background:linear-gradient(#d6d6da,#ececf0)"></div><div class="a" style="left:600px;top:196px;width:3px;height:22px;background:#e2e2e6"></div><div class="a" style="left:603px;top:196px;width:91px;height:23px;background:#fff;border:1px solid #e4e4ea;border-right-color:#a0a0ae;border-bottom:none"></div><div class="t " style="left:612px;top:201px;">Flightdatabase</div><div class="gb" style="top:220px;height:85px"><div class="gbh"></div></div><div class="t " style="left:613.8px;top:223px;">Database type</div><div class="gb" style="top:309px;height:144px"><div class="gbh"></div></div><div class="t " style="left:613.8px;top:312px;">Common</div><div class="gb" style="top:456px;height:77px"><div class="gbh"></div></div><div class="t " style="left:613.8px;top:459px;">User / Password</div><div class="gb" style="top:536px;height:88px"><div class="gbh"></div></div><div class="t " style="left:613.8px;top:539px;">Data source</div><div class="gb" style="top:627px;height:73px"><div class="gbh"></div></div><div class="t " style="left:613.8px;top:630px;">Options</div><div class="in" style="left:610px;top:246px;width:332px;height:51px;"></div><svg class="a" style="left:618px;top:254px" width="32" height="36" viewBox="0 0 32 36"><defs><linearGradient id="sq" x1="0" y1="0" x2="0" y2="1"><stop offset="0" stop-color="#90d2f5"/><stop offset="0.65" stop-color="#1584d2"/><stop offset="1" stop-color="#0878cc"/></linearGradient></defs><path d="M3.6 3.8H24.5L18.3 30.6H3.6Q2 30.6 2 29V5.4Q2 3.8 3.6 3.8Z" fill="url(#sq)"/><path d="M18.3 30.5C16.8 22 20 8.5 26.3 2.2C28.5 0.7 31.2 1.8 30.9 5.5C30.2 13.5 26.2 21.5 20 27L18.8 30.5L18.5 34.2L18.1 30.5Z" fill="#0b3a5e"/><path d="M19 28.5C20.4 19.5 23.8 10 28.2 4.2" stroke="#fff" stroke-width="1.1" fill="none"/></svg><div class="t " style="left:653.5px;top:265px;letter-spacing:-0.4px">SQLite</div><svg class="a" style="left:925px;top:270px" width="8" height="4" viewBox="0 0 8 4"><path d="M0.5 0H7.5L4 4Z" fill="#222"/></svg><div class="t " style="left:610.5px;top:338px;">Name</div><div class="t " style="left:610.5px;top:395px;">Description</div><div class="in" style="left:667px;top:335px;width:714px;height:19.5px;background:#f4f4f6"></div><div class="t " style="left:670.5px;top:338px;">Flightdatabase</div><div class="in" style="left:667px;top:357px;width:714px;height:88.5px;"></div><div class="t " style="left:670.5px;top:358px;letter-spacing:-0.02px">This sample database contains a wide variety of data related to airports</div><div class="a" style="left:1363px;top:358px;width:17px;height:86.5px;background:#f4f4f7"></div><svg class="a" style="left:1367px;top:363px" width="9" height="78" viewBox="0 0 9 78"><path d="M1 5L4.5 1.5L8 5Z M1 71.5L4.5 75L8 71.5Z" fill="#cdcdd4"/></svg><div class="t " style="left:610.5px;top:485px;">Username</div><div class="t " style="left:610.5px;top:507px;">Password</div><div class="in" style="left:667px;top:482px;width:714px;height:19.5px;"></div><div class="in" style="left:667px;top:504px;width:527.5px;height:19.5px;"></div><div class="a" style="left:1197px;top:504px;width:184px;height:22px;border:1px solid #a8a8b6;border-radius:3px;background:linear-gradient(#f5f5f8,#e0e0e7 50%,#e9e9ee);box-shadow:inset 0 0 0 1px #f6f6f9"></div><svg class="a" style="left:1202px;top:507px" width="17" height="18" viewBox="0 0 17 18"><path d="M1.5 1.5H9.5L12.5 4.5V14.5H1.5Z" fill="#fff" stroke="#68686e"/><path d="M9.5 1.5V4.5H12.5" fill="none" stroke="#68686e"/><path d="M6.8 16.2L7.2 13.4L13 7.6L15.4 10L9.6 15.8Z" fill="#3a7abf" stroke="#f2f2f6" stroke-width="1.6" paint-order="stroke"/><path d="M8.3 12.5L10.5 14.7M12 8.8L14.2 11" stroke="#cfe0f2" stroke-width="0.7"/></svg><div class="t c " style="left:1197.5px;width:200px;top:508px;">Edit</div><div class="in" style="left:611px;top:562px;width:770px;height:19.5px;"></div><div class="t " style="left:614px;top:565px;">Database\Flightdatabase.db</div><div class="a" style="left:1367px;top:571px;width:2px;height:2px;background:#111;box-shadow:4px 0 #111,8px 0 #111"></div><div class="a" style="left:615.5px;top:594.5px;width:13px;height:13px;border-radius:50%;border:1px solid #8a8a96;background:radial-gradient(circle at 50% 40%,#fff 40%,#e2e2e8)"></div><div class="a" style="left:743.5px;top:594.5px;width:13px;height:13px;border-radius:50%;border:1px solid #8a8a96;background:radial-gradient(circle at 50% 40%,#fff 40%,#e2e2e8)"></div><div class="a" style="left:746.5px;top:597.5px;width:7px;height:7px;border-radius:50%;background:radial-gradient(circle at 40% 35%,#6aa0ea,#2a55b8)"></div><div class="t " style="left:633px;top:594px;">Absolute path</div><div class="t " style="left:760.5px;top:594px;">Relative path</div><div class="a" style="left:612.5px;top:656.5px;width:12.5px;height:12.5px;border:1px solid #8e8e9a;background:linear-gradient(135deg,#e8e8ee,#fff 60%)"></div><div class="a" style="left:612.5px;top:677.5px;width:12.5px;height:12.5px;border:1px solid #8e8e9a;background:linear-gradient(135deg,#e8e8ee,#fff 60%)"></div><div class="t " style="left:628.5px;top:656px;">Readonly</div><div class="t " style="left:628.5px;top:677px;">Save password</div></div><svg class="a" style="left:0;top:0" width="1407" height="848" viewBox="0 0 1407 848"><path fill-rule="evenodd" fill="rgba(0,0,0,0.635)" d="M0 0H1407V848H0Z M167 0H292V41H316V143H3V41H167Z M600 196H705V218H1395V705H600Z"/></svg><div class="lbl" style="left:327.4px;top:78.1px;font-size:28px;transform-origin:0 0;transform:scaleX(1.0942)">Menu</div><div class="lbl" style="left:380px;top:255.1px;font-size:28px;transform-origin:0 0;transform:scaleX(1.0162)">Database type</div><div class="lbl" style="left:300.8px;top:335.3px;font-size:28px;transform-origin:0 0;transform:scaleX(1.0222)">General information</div><div class="lbl" style="left:425.3px;top:486.6px;font-size:28px;transform-origin:0 0;transform:scaleX(0.9919)">Credentials</div><div class="lbl" style="left:333.1px;top:553.5px;font-size:28px;transform-origin:0 0;transform:scaleX(0.9952)">Path to datasource</div><div class="lbl" style="left:447.8px;top:628.9px;font-size:28px;transform-origin:0 0;transform:scaleX(1.0059)">Options</div></body></html>
